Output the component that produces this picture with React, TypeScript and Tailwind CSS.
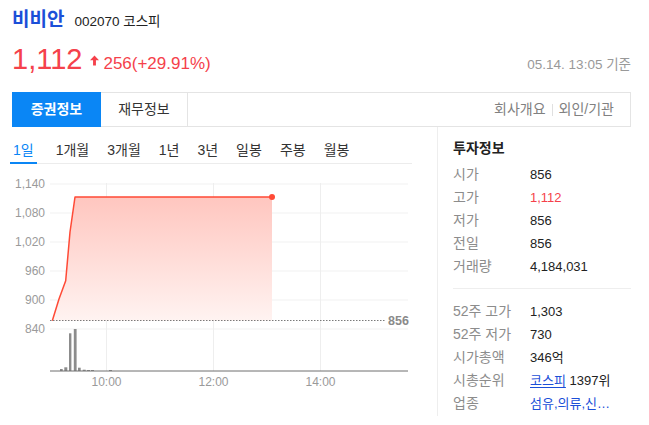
import React from "react";

const periods = ["1일", "1개월", "3개월", "1년", "3년", "일봉", "주봉", "월봉"];

const info1 = [
  { label: "시가", value: "856" },
  { label: "고가", value: "1,112", red: true },
  { label: "저가", value: "856" },
  { label: "전일", value: "856" },
  { label: "거래량", value: "4,184,031" },
];

function Chart() {
  const grid = [
    { y: 185, t: "1,140" },
    { y: 214, t: "1,080" },
    { y: 243, t: "1,020" },
    { y: 272, t: "960" },
    { y: 301, t: "900" },
    { y: 330, t: "840" },
  ];
  const bars = [
    [60, 2.7, 370],
    [64.3, 3, 368.3],
    [69, 2.4, 334.3],
    [73.8, 2.8, 330],
    [78, 2.7, 368.7],
    [82.7, 3, 370.7],
    [87, 3, 371],
    [91, 3, 371],
    [109, 3, 371],
  ];
  return (
    <svg width="400" height="235" viewBox="12 165 400 235" className="block">
      <defs>
        <linearGradient id="fillRed" x1="0" y1="0" x2="0" y2="1">
          <stop offset="0%" stopColor="#ffc6bf" />
          <stop offset="100%" stopColor="#fff3f1" />
        </linearGradient>
      </defs>
      {grid.map((g) => (
        <g key={g.t}>
          <line x1="50" x2="408" y1={g.y} y2={g.y} stroke="#f1f1f1" strokeWidth="1" />
          <text
            x="45"
            y={g.y + 4}
            textAnchor="end"
            fontSize="12"
            fill="#9a9a9a"
            fontFamily="Liberation Sans, sans-serif"
          >
            {g.t}
          </text>
        </g>
      ))}
      {[106.5, 213.5, 320.5].map((x) => (
        <line key={x} x1={x} x2={x} y1="184" y2="372" stroke="#eeeeee" strokeWidth="1" />
      ))}
      <path
        d="M52.3 321.7 L59 300 L65.7 281.7 L70 233 L75 198 L272 198 L272 321.7 Z"
        fill="url(#fillRed)"
      />
      <polyline
        points="52.3,321.7 59,300 65.7,281.7 70,233 75,198 272,198"
        fill="none"
        stroke="#ff4a36"
        strokeWidth="1.5"
        strokeLinejoin="round"
      />
      <circle cx="272" cy="198" r="3" fill="#ff4a36" />
      <line
        x1="50"
        x2="385"
        y1="321.5"
        y2="321.5"
        stroke="#7a7a7a"
        strokeWidth="1"
        strokeDasharray="1.5 1.5"
      />
      <text
        x="388"
        y="326"
        fontSize="12.5"
        fontWeight="bold"
        fill="#8a8a8a"
        fontFamily="Liberation Sans, sans-serif"
      >
        856
      </text>
      {bars.map(([x, w, top]) => (
        <rect key={x} x={x} y={top} width={w} height={372 - top} fill="#8c8c8c" />
      ))}
      <line x1="50" x2="408" y1="372" y2="372" stroke="#6f6f6f" strokeWidth="1" />
      {[
        { x: 106.5, t: "10:00" },
        { x: 213.5, t: "12:00" },
        { x: 320.5, t: "14:00" },
      ].map((l) => (
        <text
          key={l.t}
          x={l.x}
          y="386.5"
          textAnchor="middle"
          fontSize="12"
          fill="#9a9a9a"
          fontFamily="Liberation Sans, sans-serif"
        >
          {l.t}
        </text>
      ))}
    </svg>
  );
}

function InfoRow({ label, children }: { label: string; children: React.ReactNode }) {
  return (
    <div className="flex h-[23px] items-center">
      <span className="w-[77px] text-[14px] text-[#8c8c8c]">{label}</span>
      <span className="text-[13px] text-[#222]">{children}</span>
    </div>
  );
}

export default function App() {
  return (
    <div className="min-h-[425px] bg-white font-['Liberation_Sans','Noto_Sans_CJK_KR',sans-serif]">
      <div className="ml-3 w-[619px]">
        {/* title */}
        <div className="mt-[8px] flex h-[24px] items-baseline gap-[10px]">
          <span className="text-[19px] font-bold leading-[24px] text-[#1b4fd8]">비비안</span>
          <span className="text-[13.5px] leading-[24px] text-[#222]">002070 코스피</span>
        </div>

        {/* price */}
        <div className="mt-[10px] flex h-[34px] items-baseline justify-between">
          <div className="leading-[34px] text-[#f5414b]">
            <span className="text-[29px]">1,112</span>
            <svg
              width="9"
              height="11"
              viewBox="0 0 10 11"
              className="ml-[8px] mr-[4px] inline-block align-[3px]"
            >
              <path d="M5 0 L10 5.2 H6.6 V11 H3.4 V5.2 H0 Z" fill="#f5414b" />
            </svg>
            <span className="text-[17px]">256(+29.91%)</span>
          </div>
          <span className="text-[13.5px] text-[#999]">05.14. 13:05 기준</span>
        </div>

        {/* tabs */}
        <div className="mt-[16px] flex h-[35px] border border-[#e4e4e4]">
          <div className="-my-px -ml-px flex h-[35px] w-[89px] items-center justify-center bg-[#0a86f5] text-[14px] font-bold text-white">
            증권정보
          </div>
          <div className="flex w-[87px] items-center justify-center border-r border-[#e4e4e4] text-[14px] text-[#333]">
            재무정보
          </div>
          <div className="flex flex-1 items-center justify-end pr-[16px] text-[14px] text-[#808080]">
            <span>회사개요</span>
            <span className="mx-[6px] h-[12px] w-px bg-[#e0e0e0]" />
            <span>외인/기관</span>
          </div>
        </div>

        <div className="flex">
          {/* left: chart */}
          <div className="w-[400px]">
            <div className="flex h-[37px] items-start border-b border-[#ececec] pt-[13px]">
              {periods.map((p, i) => (
                <div
                  key={p}
                  className={`relative h-[23px] text-[14px] leading-[20px] ${
                    i === 0 ? "ml-[1px] mr-[22px] text-[#0a86f5]" : "mr-[18px] text-[#333]"
                  }`}
                >
                  {p}
                  {i === 0 && (
                    <span className="absolute -bottom-px -left-[3px] -right-[3px] h-[2px] bg-[#0a86f5]" />
                  )}
                </div>
              ))}
            </div>
            <Chart />
          </div>

          {/* right: info */}
          <div className="ml-[25px] flex-1 border-l border-[#eeeeee] pl-[15px] pt-[10px] pb-[1px]">
            <div className="flex h-[23px] items-center text-[14px] font-bold text-[#222]">투자정보</div>
            <div className="mt-[3px]">
              {info1.map((r) => (
                <InfoRow key={r.label} label={r.label}>
                  <span className={r.red ? "text-[#f5414b]" : ""}>{r.value}</span>
                </InfoRow>
              ))}
            </div>
            <div className="mt-[10px] mb-[11px] h-px bg-[#eeeeee]" />
            <InfoRow label="52주 고가">1,303</InfoRow>
            <InfoRow label="52주 저가">730</InfoRow>
            <InfoRow label="시가총액">346억</InfoRow>
            <InfoRow label="시총순위">
              <span className="text-[#1b4fd8] underline underline-offset-2">코스피</span> 1397위
            </InfoRow>
            <InfoRow label="업종">
              <span className="text-[#1b4fd8]">섬유,의류,신…</span>
            </InfoRow>
          </div>
        </div>
      </div>
    </div>
  );
}
